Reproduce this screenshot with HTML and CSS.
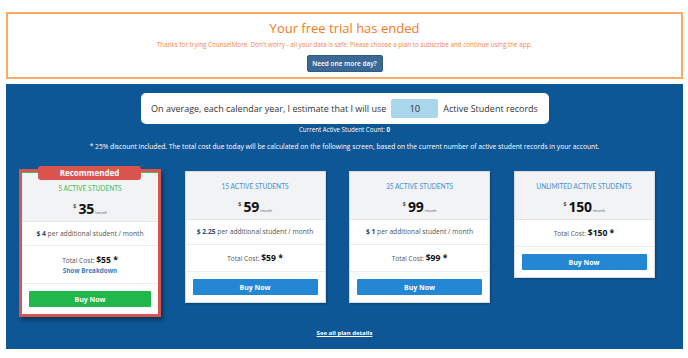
FILE: index.html
```html
<!DOCTYPE html>
<html lang="en">
<head>
<meta charset="utf-8">
<title>Choose a plan</title>
<link rel="stylesheet" href="styles.css">
</head>
<body>
<div class="page">
  <section class="trial">
    <h1 class="trial-title">Your free trial has ended</h1>
    <p class="trial-text">Thanks for trying CounselMore. Don't worry - all your data is safe. Please choose a plan to subscribe and continue using the app.</p>
    <button class="trial-btn">Need one more day?</button>
  </section>

  <section class="plans">
    <div class="estimate">
      <span>On average, each calendar year, I estimate that I will use</span>
      <span class="estimate-input">10</span>
      <span>Active Student records</span>
    </div>
    <p class="count">Current Active Student Count: <b>0</b></p>
    <p class="note">* 25% discount included. The total cost due today will be calculated on the following screen, based on the current number of active student records in your account.</p>

    <div class="cards">
      <div class="card card-rec">
        <div class="badge">Recommended</div>
        <div class="card-head">
          <div class="card-title green">5 ACTIVE STUDENTS</div>
          <div class="price"><sup>$</sup><span class="amount">35</span><span class="per">/month</span></div>
        </div>
        <div class="extra"><b>$ 4</b> per additional student / month</div>
        <div class="total total-rec">
          <div>Total Cost: <b>$55 *</b></div>
          <div class="breakdown">Show Breakdown</div>
        </div>
        <div class="card-foot"><button class="buy buy-green">Buy Now</button></div>
      </div>

      <div class="card">
        <div class="card-head">
          <div class="card-title">15 ACTIVE STUDENTS</div>
          <div class="price"><sup>$</sup><span class="amount">59</span><span class="per">/month</span></div>
        </div>
        <div class="extra"><b>$ 2.25</b> per additional student / month</div>
        <div class="total"><div>Total Cost: <b>$59 *</b></div></div>
        <div class="card-foot"><button class="buy">Buy Now</button></div>
      </div>

      <div class="card">
        <div class="card-head">
          <div class="card-title">35 ACTIVE STUDENTS</div>
          <div class="price"><sup>$</sup><span class="amount">99</span><span class="per">/month</span></div>
        </div>
        <div class="extra"><b>$ 1</b> per additional student / month</div>
        <div class="total"><div>Total Cost: <b>$99 *</b></div></div>
        <div class="card-foot"><button class="buy">Buy Now</button></div>
      </div>

      <div class="card">
        <div class="card-head">
          <div class="card-title">UNLIMITED ACTIVE STUDENTS</div>
          <div class="price"><sup>$</sup><span class="amount">150</span><span class="per">/month</span></div>
        </div>
        <div class="total total-last"><div>Total Cost: <b>$150 *</b></div></div>
        <div class="card-foot"><button class="buy">Buy Now</button></div>
      </div>
    </div>

    <a class="details" href="#">See all plan details</a>
  </section>
</div>
</body>
</html>
```

FILE: styles.css
```css
* { box-sizing: border-box; }
html, body { margin: 0; padding: 0; background: #fff; }
body { font-family: "Open Sans", "Liberation Sans", sans-serif; color: #333; }

.page { padding: 12px 5px 0 6px; }

.trial {
  border: 2px solid #fdaa68;
  height: 67px;
  text-align: center;
  padding-top: 5px;
}
.trial-title {
  margin: 0;
  font-size: 13px;
  line-height: 18px;
  font-weight: 400;
  color: #f47a22;
}
.trial-text {
  margin: 3px 0 0;
  font-size: 6.3px;
  line-height: 9px;
  color: #f58646;
}
.trial-btn {
  margin-top: 4px;
  width: 76px;
  height: 17px;
  padding: 0;
  border: 1px solid #2f5a82;
  border-radius: 2px;
  background: #3b6894;
  color: #fff;
  font-family: inherit;
  font-size: 6.5px;
  font-weight: 600;
}

.plans {
  margin-top: 5px;
  background: #0e5796;
  height: 265px;
  padding-top: 9px;
  color: #fff;
  text-align: center;
}

.estimate {
  width: 408px;
  height: 31px;
  margin: 0 auto;
  background: #fff;
  border-radius: 5px;
  display: flex;
  align-items: center;
  justify-content: center;
  gap: 5px;
  color: #333;
  font-size: 9px;
}
.estimate-input {
  width: 47px;
  height: 19px;
  line-height: 19px;
  background: #a9d6ea;
  border-radius: 2px;
  text-align: center;
  font-size: 9.5px;
}

.count {
  margin: 2px 0 0;
  font-size: 6.2px;
  line-height: 8px;
}
.note {
  margin: 9px 0 0;
  font-size: 6.7px;
  line-height: 8px;
}

.cards {
  margin-top: 18px;
  padding-left: 13px;
  display: flex;
  align-items: flex-start;
  gap: 23.5px;
  text-align: center;
}
.card {
  position: relative;
  width: 141px;
  margin-top: 2px;
  background: #fff;
  border: 1px solid #d8dde3;
  box-shadow: 1px 1px 2px rgba(0, 0, 0, 0.25);
  color: #444;
}
.card-rec {
  width: 142px;
  margin-top: 0;
  border: 3px solid #d9534f;
  box-shadow: 2px 3px 4px rgba(0, 0, 0, 0.4);
}
.badge {
  position: absolute;
  left: 16px;
  top: -6px;
  width: 103px;
  height: 14px;
  line-height: 14px;
  background: #d9534f;
  border-radius: 3px;
  color: #fff;
  font-size: 8px;
  font-weight: 700;
}

.card-head {
  background: #f2f3f5;
  padding: 10px 0 6px;
  border-bottom: 1px solid #e4e6e9;
}
.card-rec .card-head {
  border-top: 1px solid #3cc05a;
  padding: 11px 0 6px;
}
.card-title {
  font-family: Lato, "Open Sans", sans-serif;
  font-size: 6.6px;
  line-height: 8px;
  color: #3f8fd2;
}
.card-title.green { color: #3ebd55; }

.price {
  margin-top: 5px;
  height: 18px;
  line-height: 18px;
  color: #111;
}
.price sup {
  font-size: 6px;
  vertical-align: 6px;
  margin-right: 2px;
}
.amount {
  font-size: 14px;
  font-weight: 700;
  letter-spacing: -0.3px;
}
.per {
  font-size: 3.5px;
  color: #555;
  margin-left: 1px;
}

.extra {
  height: 25px;
  line-height: 24px;
  border-bottom: 1px solid #ececec;
  font-size: 6.7px;
  color: #555;
}
.extra b { color: #2a4a70; font-weight: 700; }
.card-rec .extra { height: 24px; line-height: 23px; }

.total {
  height: 27px;
  line-height: 26px;
  border-bottom: 1px solid #ececec;
  font-size: 6.6px;
  color: #555;
}
.total b {
  font-size: 8.6px;
  font-weight: 700;
  color: #111;
}
.total-rec {
  height: 38px;
  line-height: 10px;
  padding-top: 9px;
}
.breakdown {
  margin-top: 1px;
  line-height: 8px;
  font-size: 6.3px;
  font-weight: 700;
  color: #3a7bc0;
}

.card-foot { padding: 7px 7px 7px; }
.buy {
  display: block;
  width: 100%;
  height: 16px;
  padding: 0;
  border: none;
  border-radius: 1px;
  background: #2487d3;
  color: #fff;
  font-family: inherit;
  font-size: 7px;
  font-weight: 700;
}
.buy-green { background: #21b74a; }

.details {
  display: inline-block;
  margin-top: 12px;
  color: #fff;
  font-size: 6px;
  font-weight: 700;
  text-decoration: underline;
}
```
